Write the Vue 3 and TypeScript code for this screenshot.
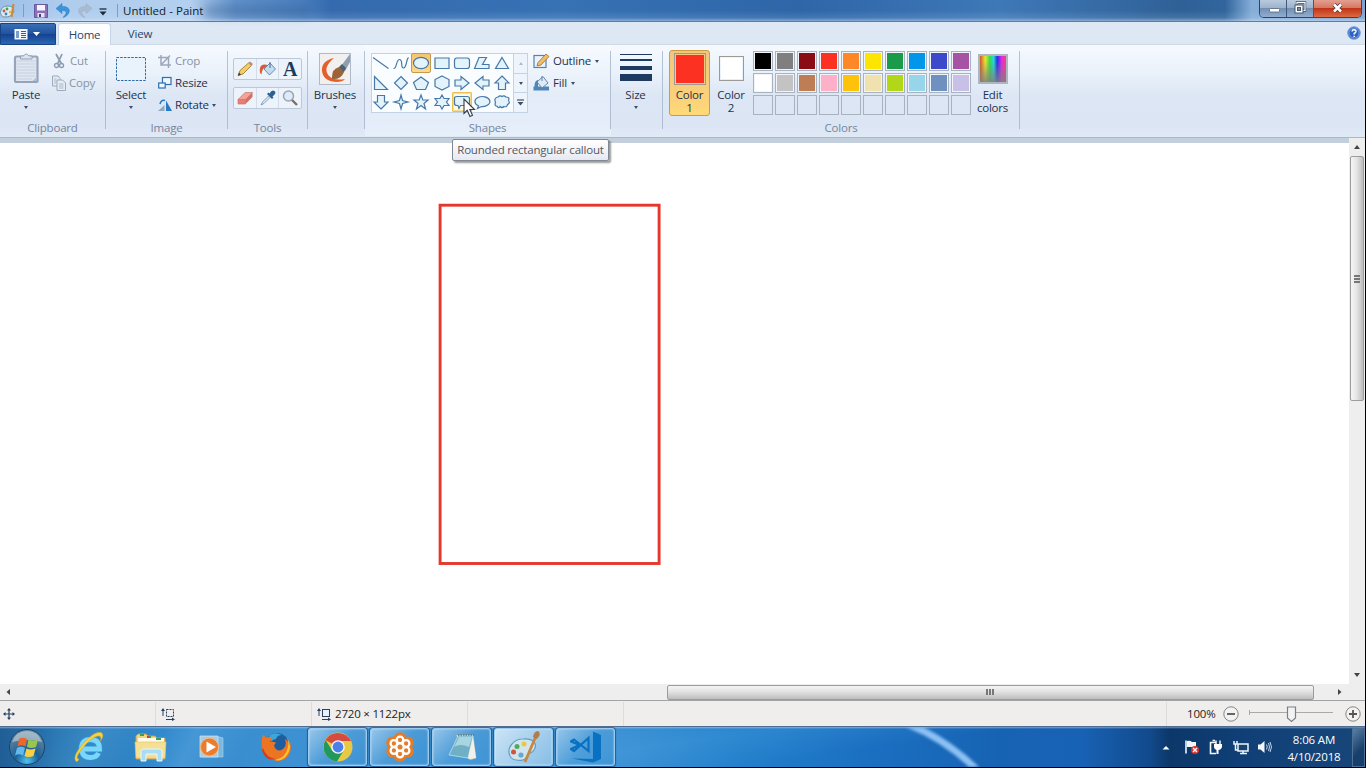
<script setup lang="ts">
interface Shape { d: string; state?: string }

const shapes: Shape[] = [
  { d: 'M2 4.500 L17.500 15.500' },
  { d: 'M2.500 15.500 C6 16 5 6.500 8.500 6.500 C12.500 6.500 9 15 12.500 15 C16 15 15 6 17.500 4.500' },
  { d: 'M2.500 10A7.500 5.700 0 1 0 17.500 10A7.500 5.700 0 1 0 2.500 10Z', state: 'active' },
  { d: 'M3 5H17V15.500H3Z' },
  { d: 'M5 5H15Q17.500 5 17.500 7.500V13Q17.500 15.500 15 15.500H5Q2.500 15.500 2.500 13V7.500Q2.500 5 5 5Z' },
  { d: 'M2.500 15.500L7 4.500H14.500L10.500 11.500H17V15.500Z' },
  { d: 'M10 4.500L16.500 15.500H3.500Z' },
  { d: 'M3.500 3.500V16.500H16.500Z' },
  { d: 'M10 3.500L16.500 10L10 16.500L3.500 10Z' },
  { d: 'M10 4L17.500 9.500L14.500 16.500H5.500L2.500 9.500Z' },
  { d: 'M10 3L17 6.500V13.500L10 17L3 13.500V6.500Z' },
  { d: 'M3 7H9V3.500L17 10L9 16.500V13H3Z' },
  { d: 'M17 7H11V3.500L3 10L11 16.500V13H17Z' },
  { d: 'M10 3L17 10H13.500V16.500H6.500V10H3Z' },
  { d: 'M10 17L17 10H13.500V3.500H6.500V10H3Z' },
  { d: 'M10 3L11.500 8.500L17 10L11.500 11.500L10 17L8.500 11.500L3 10L8.500 8.500Z' },
  { d: 'M10 3L11.800 8H17L13 11.500L14.500 17L10 13.500L5.500 17L7 11.500L3 8H8.200Z' },
  { d: 'M10 3L12 6.500H17L14.500 10L17 13.500H12L10 17L8 13.500H3L5.500 10L3 6.500H8Z' },
  { d: 'M5 4.500H15Q17.500 4.500 17.500 6.500V11.500Q17.500 13.500 15 13.500H8.500L7 16.500L6 13.500H5Q2.500 13.500 2.500 11.500V6.500Q2.500 4.500 5 4.500Z', state: 'hover' },
  { d: 'M5.500 16.500L6.500 13.800A7.500 5 0 1 1 9.500 14.500Z' },
  { d: 'M6 5Q8 3 10 4.500Q12 3 14 5Q18 5 16.500 8.500Q18.500 11 15.500 12.500Q15 15.500 12 14.500Q10 16.500 8 14.500Q6.500 17 5.500 14.500Q2 14 3.500 10.500Q1.500 6 6 5Z' },
]

const palette: string[] = [
  '#000000', '#7f7f7f', '#8a0d15', '#fd3122', '#fe8727', '#fee500', '#199b49', '#0096ea', '#3d49cb', '#a653a4',
  '#ffffff', '#c3c3c3', '#bd7e55', '#ffb0c9', '#ffc20b', '#efe2af', '#b2d618', '#96d5ea', '#6e91bf', '#c9c0e7',
  '', '', '', '', '', '', '', '', '', '',
]

const petals: [number, number][] = [[16, 9], [22.1, 12.5], [22.1, 19.5], [16, 23], [9.900, 19.5], [9.900, 12.5]]
</script>

<template>
  <div class="screen">
    <div class="window">
      <header class="titlebar">
        <svg class="app-ico" width="16" height="17" viewBox="0 0 16 17">
          <path d="M8 4C13 4 15 8 13 11C11 14 9 15 5 15C1 15 0 11 1 8C2 5 5 4 8 4Z" fill="#dcebf0" stroke="#5f98ad" />
          <circle cx="4" cy="9" r="1.400" fill="#d35a3a" /><circle cx="7" cy="7" r="1.400" fill="#4aa04a" /><circle cx="6" cy="12" r="1.400" fill="#3f84c9" /><circle cx="10" cy="10" r="1.200" fill="#e5b73a" />
          <path d="M13.500 2L11.500 15" stroke="#cd8b3e" stroke-width="2.200" />
        </svg>
        <i class="tdiv d1"></i>
        <svg class="qi save" width="14" height="14" viewBox="0 0 14 14">
          <path d="M0.500 0.500H13.500V13.500H0.500Z" fill="#8b70b8" stroke="#6b589c" /><path d="M3 1H11V6.500H3Z" fill="#f4f3fb" /><path d="M3.500 9H10.500V13.500H3.500Z" fill="#e6e0f2" /><path d="M5 10H7V13H5Z" fill="#4b3a78" />
        </svg>
        <svg class="qi undo" width="14" height="15" viewBox="0 0 14 15">
          <path d="M0 5.500L6 0.500V3.500C16 3 15 12 7 14.500C11.500 10 11 7.500 6 7.500V10.500Z" fill="#3a95da" stroke="#2b7dc0" stroke-width=".5" />
        </svg>
        <svg class="qi redo" width="14" height="15" viewBox="0 0 14 15">
          <path d="M14 5.500L8 0.500V3.500C-2 3 -1 12 7 14.500C2.500 10 3 7.500 8 7.500V10.500Z" fill="#a9bbd0" stroke="#9aaec6" stroke-width=".5" />
        </svg>
        <svg class="qi more" width="8" height="8" viewBox="0 0 8 8"><path d="M0.500 1H7.500" stroke="#1c2a3a" stroke-width="1.300" /><path d="M0.500 3.500H7.500L4 7.500Z" fill="#1c2a3a" /></svg>
        <i class="tdiv"></i>
        <span class="title">Untitled - Paint</span>
        <span class="ghost"></span>
        <div class="controls">
          <button class="wb"><svg width="28" height="17"><rect x="9.500" y="8.500" width="10" height="3.500" rx="1" fill="#fff" stroke="#55657a" stroke-width=".8" /></svg></button>
          <button class="wb mid"><svg width="27" height="17"><path d="M10 4.500V2.500H18V10.500H16" fill="none" stroke="#46566b" stroke-width="2.400" /><path d="M10 4V2.500H18V10.500H16" fill="none" stroke="#fff" stroke-width="1.100" /><rect x="8" y="5" width="8" height="8" fill="#fff" stroke="#46566b" /><rect x="10.500" y="7.500" width="3" height="3" fill="#7f92ab" stroke="#46566b" /></svg></button>
          <button class="wb close"><svg width="46" height="17"><path d="M20 4.500L27 11.500M27 4.500L20 11.500" stroke="#5c3b3b" stroke-width="4.200" /><path d="M20 4.500L27 11.500M27 4.500L20 11.500" stroke="#fff" stroke-width="2.500" /></svg></button>
        </div>
      </header>

      <nav class="tabs">
        <button class="file">
          <svg width="28" height="13" viewBox="0 0 28 13"><rect x=".5" y="1" width="13" height="10.500" fill="#f4f9ff" /><path d="M2 3H5V10H2Z" fill="#7c9fc9" /><path d="M7 3.500H12M7 5.500H12M7 7.500H12M7 9.500H12" stroke="#315f9c" /><path d="M19 4H26L22.500 8Z" fill="#fff" /></svg>
        </button>
        <button class="tab on"><span>Home</span></button>
        <button class="tab"><span>View</span></button>
        <svg class="help" width="14" height="14" viewBox="0 0 14 14"><circle cx="7" cy="7" r="6.300" fill="#2c62c4" stroke="#7fa3dd" /><circle cx="7" cy="7" r="5" fill="none" stroke="#8fb4ee" stroke-width=".7" /><path d="M5 5.500Q5.200 3.700 7.200 3.800Q9.300 4 8.900 5.700Q8.500 6.700 7.200 7.400V8.600M7.200 9.700V11" fill="none" stroke="#fff" stroke-width="1.500" /></svg>
      </nav>

      <section class="ribbon">
        <div class="group clipboard">
          <div class="body">
            <div class="big">
              <svg width="28" height="32" viewBox="0 0 28 32"><rect x="3" y="3.500" width="22.500" height="25.500" rx="1.500" fill="#dfe6f1" stroke="#96a4ba" stroke-width="2.200" /><path d="M5 8H23.500M5 11H23.500M5 14H23.500M5 17H23.500M5 20H23.500M5 23H23.500M5 26H20" stroke="#c6d0df" /><path d="M8.500 6V3H11.500Q14.200 -1 17 3H20V6Z" fill="#dce3ee" stroke="#93a1b7" /><path d="M20.500 28L24.500 24V28Z" fill="#b3bfd0" /></svg>
              <span>Paste</span><i class="arrow"></i>
            </div>
            <div class="rows">
              <div class="row off"><svg width="15" height="16" viewBox="0 0 15 16"><path d="M3 1L8.500 11M9 1L4.500 11" stroke="#8e9cb2" stroke-width="1.800" /><circle cx="3.500" cy="12.500" r="2" fill="none" stroke="#8e9cb2" stroke-width="1.400" /><circle cx="8.500" cy="12.500" r="2" fill="none" stroke="#8e9cb2" stroke-width="1.400" /></svg><span>Cut</span></div>
              <div class="row off copy"><svg width="16" height="16" viewBox="0 0 16 16"><path d="M.5 1H6L8 3.500V11H.5Z" fill="#e7edf5" stroke="#9ba8bd" /><path d="M5 5H10.500L13.500 8V15.500H5Z" fill="#e7edf5" stroke="#9ba8bd" /><path d="M2 4H4.500M2 6H4.500M2 8H4.500M7 9H11.500M7 11H11.500M7 13H11.500" stroke="#aab5c7" /></svg><span>Copy</span></div>
            </div>
          </div>
          <footer>Clipboard</footer>
        </div>

        <div class="group image">
          <div class="body">
            <div class="big">
              <svg width="32" height="32" viewBox="0 0 32 32"><rect x="1.500" y="4.500" width="29" height="23" fill="#e9f3fc" stroke="#2c6aa8" stroke-dasharray="2.500 1.200" /></svg>
              <span>Select</span><i class="arrow"></i>
            </div>
            <div class="rows">
              <div class="row off"><svg width="14" height="14" viewBox="0 0 14 14"><path d="M3 1V11H13M0 3.500H10.500V14M3 11L12 1.500" fill="none" stroke="#9ba8bb" stroke-width="1.500" /></svg><span>Crop</span></div>
              <div class="row"><svg width="14" height="14" viewBox="0 0 14 14"><rect x="4.500" y="1.500" width="8.500" height="7" fill="#eef7ff" stroke="#2d6fae" stroke-width="1.200" /><rect x=".7" y="7" width="6.500" height="5" fill="#eef7ff" stroke="#2d6fae" stroke-width="1.200" /></svg><span>Resize</span></div>
              <div class="row"><svg width="14" height="15" viewBox="0 0 14 15"><path d="M8 2.500V13H14Z" fill="#2779c3" /><path d="M6.500 7V13H0Z" fill="#8fa9bb" /><path d="M2 6Q3 1.500 7 2.500" fill="none" stroke="#2779c3" stroke-width="1.500" /></svg><span>Rotate</span><i class="arrow"></i></div>
            </div>
          </div>
          <footer>Image</footer>
        </div>

        <div class="group tools">
          <div class="body">
            <div class="toolbox">
              <b><svg width="18" height="18" viewBox="0 0 18 18"><path d="M2 15.500L4 10.500L12.500 3L15.500 5.500L7 14Z" fill="#f5cd66" stroke="#a37f38" stroke-width=".9" /><path d="M12.500 3L14 1.500L17 4L15.500 5.500Z" fill="#c4877d" /><path d="M2 16L3 12.500L5 14.500Z" fill="#3c342b" /></svg></b>
              <b><svg width="18" height="18" viewBox="0 0 18 18"><path d="M5 9L11 3L16.500 9L10.500 15Z" fill="#c4dcf2" stroke="#5e7fa6" stroke-width=".9" /><path d="M11 2V8" stroke="#5e7fa6" stroke-width="1.200" /><path d="M9 5Q2 3 1 8Q0 13 2.500 14.500Q3 9 5.500 8Z" fill="#d95c35" /></svg></b>
              <b class="glyph">A</b>
            </div>
            <div class="toolbox second">
              <b><svg width="18" height="18" viewBox="0 0 18 18"><path d="M2 10.500L9 3.500H16.500L9.500 10.500Z" fill="#f3a398" stroke="#c97972" stroke-width=".7" /><path d="M2 10.500H9.500V15H2Z" fill="#ea7c72" stroke="#c97972" stroke-width=".7" /><path d="M9.500 10.500L16.500 3.500V8L9.500 15Z" fill="#d17068" /></svg></b>
              <b><svg width="18" height="18" viewBox="0 0 18 18"><path d="M9.500 7L3.500 13L2 16L5 14.500L11 8.500Z" fill="#d5e8f5" stroke="#6f8fac" stroke-width=".8" /><path d="M8 5L13 10L14.500 8.500L13.500 7.500Q18 4 15.500 2Q13 0 10.500 4.500L9.500 3.500Z" fill="#2b6295" /></svg></b>
              <b><svg width="18" height="18" viewBox="0 0 18 18"><circle cx="7.500" cy="7" r="5" fill="#dcebf7" stroke="#9aa5b4" stroke-width="1.500" /><path d="M11 11L16 16" stroke="#7b706b" stroke-width="2.400" /></svg></b>
            </div>
          </div>
          <footer>Tools</footer>
        </div>

        <div class="group brushes">
          <div class="body">
            <div class="big">
              <svg width="32" height="32" viewBox="0 0 32 32"><rect x=".5" y=".5" width="31" height="31" fill="#f2f0ee" stroke="#b0bac8" /><path d="M15 5Q2 8 3 18Q4 28 17 29Q24 29 26 26Q15 28 10 23Q3 15 15 5Z" fill="#e35f2d" /><path d="M22 13L31 1V9L26 18Z" fill="#8da0b0" /><path d="M13 24Q13 16 20 14Q25 14 25 19Q22 27 13 26Z" fill="#9c6339" /><path d="M20 14L23 11L27 15L25 19Z" fill="#4e6072" /></svg>
              <span>Brushes</span><i class="arrow"></i>
            </div>
          </div>
        </div>

        <div class="group shapes">
          <div class="body">
            <div class="gallery">
              <div class="grid">
                <div v-for="(s, i) in shapes" :key="i" class="cell" :class="s.state">
                  <svg width="20" height="20" viewBox="0 0 20 20"><path :d="s.d" :fill="i < 2 ? 'none' : '#e2f3fb'" stroke="#4878a8" stroke-width="1.200" /></svg>
                </div>
              </div>
              <div class="spin"><b class="dim"><i class="arrow up"></i></b><b><i class="arrow"></i></b><b class="last"><svg width="7" height="7" viewBox="0 0 7 7"><path d="M0 1H7" stroke="#3f4e66" stroke-width="1.200" /><path d="M.5 3H6.500L3.500 6.500Z" fill="#3f4e66" /></svg></b></div>
            </div>
            <div class="rows">
              <div class="row"><svg width="17" height="16" viewBox="0 0 17 16"><rect x="1" y="2.500" width="12" height="12" fill="#eaf3fc" stroke="#5681ab" stroke-width="1.200" /><path d="M4 13L5 9.500L13 1L16 3.500L8 12Z" fill="#f1bd68" stroke="#9a6d3a" stroke-width=".8" /></svg><span>Outline</span><i class="arrow"></i></div>
              <div class="row"><svg width="17" height="16" viewBox="0 0 17 16"><path d="M0.500 11.500H16V15.500H0.500Z" fill="#4d86bb" /><path d="M4 7L10 1.500L15 8L9 13Z" fill="#dcebf6" stroke="#6385a8" /><path d="M5 5Q1 6 1.500 12H5Z" fill="#4d86bb" /><path d="M9 1V6" stroke="#6385a8" /></svg><span>Fill</span><i class="arrow"></i></div>
            </div>
          </div>
          <footer>Shapes</footer>
        </div>

        <div class="group size">
          <div class="body">
            <div class="big">
              <svg width="32" height="32" viewBox="0 0 32 32"><path d="M0 1.500H32" stroke="#1e3a60" /><path d="M0 7H32" stroke="#1e3a60" stroke-width="2" /><path d="M0 15H32" stroke="#1e3a60" stroke-width="4" /><path d="M0 24.500H32" stroke="#1e3a60" stroke-width="7" /></svg>
              <span>Size</span><i class="arrow"></i>
            </div>
          </div>
        </div>

        <div class="group colors">
          <div class="body">
            <div class="big color selected"><i class="swatch red"></i><span>Color</span><span>1</span></div>
            <div class="big color"><i class="swatch white"></i><span>Color</span><span>2</span></div>
            <div class="palette"><i v-for="(c, i) in palette" :key="i" :class="{ filled: c }" :style="c ? { backgroundColor: c } : {}"></i></div>
            <div class="big edit"><i class="spectrum"></i><span>Edit</span><span>colors</span></div>
          </div>
          <footer>Colors</footer>
        </div>
      </section>

      <main class="work">
        <div class="canvas">
          <svg width="700" height="500" viewBox="0 0 700 500"><rect x="440.100" y="62.200" width="219" height="358.300" fill="none" stroke="#e4382e" stroke-width="2.900" /></svg>
        </div>
        <div class="vscroll"><b><i class="arrow up dark"></i></b><div class="thumb"><i></i><i></i><i></i></div><b class="end"><i class="arrow dark"></i></b></div>
      </main>
      <div class="hscroll"><svg width="6" height="8" viewBox="0 0 6 8"><path d="M5 1V7L1.500 4Z" fill="#444" /></svg><div class="thumb"><i></i><i></i><i></i></div><svg class="right" width="6" height="8" viewBox="0 0 6 8"><path d="M1 1V7L4.500 4Z" fill="#444" /></svg></div>

      <footer class="status">
        <div class="s1"><svg width="12" height="12" viewBox="0 0 12 12"><path d="M6 1V11M1 6H11" stroke="#29405f" stroke-width="1.200" /><path d="M6 0L8 2.500H4ZM6 12L8 9.500H4ZM0 6L2.500 4V8ZM12 6L9.500 4V8Z" fill="#29405f" /></svg></div>
        <div class="s2"><svg width="14" height="13" viewBox="0 0 14 13"><path d="M2 2V8M5 11.500H12" stroke="#29405f" /><path d="M2 0L4 3H0ZM14 11.500L11 9.500V13Z" fill="#29405f" /><rect x="5.500" y="1.500" width="7" height="7" fill="none" stroke="#29405f" stroke-dasharray="2 1" /></svg></div>
        <div class="s3"><svg width="14" height="13" viewBox="0 0 14 13"><path d="M2 2V8M5 11.500H12" stroke="#29405f" /><path d="M2 0L4 3H0ZM14 11.500L11 9.500V13Z" fill="#29405f" /><rect x="5.500" y="1.500" width="7" height="7" fill="#e5f2fc" stroke="#29405f" /></svg><span>2720 × 1122px</span></div>
        <div class="s4"></div>
        <div class="s5"></div>
        <div class="zoom">
          <span>100%</span>
          <svg width="16" height="16" viewBox="0 0 16 16"><circle cx="8" cy="8" r="7.200" fill="#f2f2f2" stroke="#858585" /><path d="M4 8H12" stroke="#555" stroke-width="1.800" /></svg>
          <svg class="slider" width="84" height="18" viewBox="0 0 84 18"><path d="M0.500 5V10M0 7.500H84" stroke="#a9a9a9" /><path d="M38.500 2H46.500V13L42.500 16.500L38.500 13Z" fill="#f2f2f2" stroke="#7c8085" stroke-width="1.200" /></svg>
          <svg width="16" height="16" viewBox="0 0 16 16"><circle cx="8" cy="8" r="7.200" fill="#f2f2f2" stroke="#858585" /><path d="M4 8H12M8 4V12" stroke="#555" stroke-width="1.800" /></svg>
        </div>
      </footer>

      <footer class="taskbar">
        <svg class="swoosh" width="160" height="40" viewBox="0 0 160 40"><path d="M24 -8Q74 8 112 48" fill="none" stroke="#8dc1f4" stroke-width="7" /></svg>
        <div class="tile orb">
          <svg width="38" height="38" viewBox="0 0 38 38">
            <defs>
              <radialGradient id="orb" cx=".5" cy=".9" r=".85"><stop offset="0" stop-color="#4fc3ee" /><stop offset=".4" stop-color="#1b6096" /><stop offset="1" stop-color="#6f8c9f" /></radialGradient>
            </defs>
            <circle cx="19" cy="19" r="17.500" fill="url(#orb)" stroke="#16446f" />
            <path d="M4 14Q8 3 19 3Q30 3 34 14Q19 10 4 14Z" fill="#dbe8ee" opacity=".5" />
            <path d="M11 11Q14 8.500 19 11L17.500 18.500Q13 16 9.500 18.500Z" fill="#ee662a" />
            <path d="M20.500 11.500Q25 13.500 30 11.500L28 19Q23 21 19 19Z" fill="#99c64d" />
            <path d="M9 20Q13 17.500 17 20L15 27.500Q11 25 7 27.500Z" fill="#61b9ee" />
            <path d="M18.500 20.500Q22.500 22.500 27.500 20.500L25.500 28Q20.500 30 16.500 28Z" fill="#fccf43" />
          </svg>
        </div>
        <div class="tile ie">
          <svg width="32" height="32" viewBox="0 0 32 32"><path d="M9 18H26.500Q26.500 8.500 17.500 8.500Q8.500 8.500 8.500 17.500Q8.500 26.500 17.500 26.500Q23.500 26.500 25.500 22" fill="none" stroke="#2b95d8" stroke-width="6.400" /><path d="M9 18H26.500Q26.500 8.500 17.500 8.500Q8.500 8.500 8.500 17.500Q8.500 26.500 17.500 26.500Q23.500 26.500 25.500 22" fill="none" stroke="#7ad6fa" stroke-width="4.800" /><path d="M3 30.500Q-1 26 9 14Q21 0 28 1.500Q32 3.500 27.500 10Q29 4.500 25 5Q18 6 8 19Q1.500 28 6 28Q5 31 3 30.500Z" fill="#f9d33b" stroke="#d2a622" stroke-width=".5" /></svg>
        </div>
        <div class="tile folder">
          <svg width="34" height="32" viewBox="0 0 34 32"><path d="M2 5L4 3H12L14 5H21L23 7H31V28H2Z" fill="#eed584" stroke="#c99e4b" /><path d="M4 7H30V12H4Z" fill="#fffbe5" /><path d="M6 4H10M13 6H17M22 8H27" stroke="#3b9b5e" stroke-width="2" /><path d="M13 6H15" stroke="#c54635" stroke-width="2" /><path d="M1 11H32L31 27H2Z" fill="#f4df94" stroke="#e1c26a" stroke-width=".6" /><path d="M7 30V20Q7 18 10 18H25Q28 18 28 20V30H23V23H12V30Z" fill="#a9dcf5" stroke="#e6f8ff" /></svg>
        </div>
        <div class="tile media">
          <svg width="28" height="28" viewBox="0 0 28 28"><path d="M5 4H23L26 5V24H5Z" fill="#79b8e4" stroke="#a9d7f3" stroke-width=".6" /><path d="M3 3H21V24H3Z" fill="#a6cbe7" stroke="#cee7f7" stroke-width=".7" /><circle cx="12.500" cy="14" r="9" fill="#ea7c2c" stroke="#f8b978" /><path d="M9.500 8.500L19 14L9.500 19.500Z" fill="#fff" /></svg>
        </div>
        <div class="tile fox">
          <svg width="32" height="32" viewBox="0 0 32 32"><circle cx="17" cy="13.500" r="11.500" fill="#205d9e" /><path d="M9 5Q14 0 22 4Q17 4 16 8Q13 8 11 11Z" fill="#3da8d6" /><path d="M3 4Q5 5 6 7Q9 5 12 7L10 11Q14 10 16 12Q13 14 15 17Q19 22 24 17Q27 14 25 8Q29 10 29 16Q31 10 28 7Q34 17 28 25Q22 32 13 29Q2 26 2 15Q1 9 3 4Z" fill="#ed7521" /><path d="M27 7Q33 16 27 24Q22 31 15 29Q26 27 28 16Q29 11 27 7Z" fill="#ffc32b" /><path d="M3 17Q6 27 16 28Q5 31 2 19Z" fill="#cf3e24" /></svg>
        </div>
        <div class="app"><svg width="32" height="32" viewBox="0 0 32 32"><circle cx="16" cy="16" r="14.500" fill="#e9c942" /><path d="M16 16L3.500 9A14.500 14.500 0 0 1 29 10H16Z" fill="#d74b3e" /><path d="M3.500 9A14.500 14.500 0 0 0 15 30.500L22 19L16 22L10 19Z" fill="#22995c" /><circle cx="16" cy="16" r="6.800" fill="#f4f7fb" /><circle cx="16" cy="16" r="5.400" fill="#4b80e8" /></svg></div>
        <div class="app"><svg width="32" height="32" viewBox="0 0 32 32"><g fill="#e57c27"><circle v-for="(p, i) in petals" :key="'b' + i" :cx="p[0] + (p[0] - 16) * .2" :cy="p[1] + (p[1] - 16) * .2" r="6.400" /></g><g fill="none" stroke="#fff" stroke-width="2.300"><circle v-for="(p, i) in petals" :key="'f' + i" :cx="p[0]" :cy="p[1]" r="3.300" /></g><circle cx="16" cy="16" r="4.600" fill="#fff" /><circle cx="16" cy="16" r="2.500" fill="#e57c27" /></svg></div>
        <div class="app"><svg width="32" height="32" viewBox="0 0 32 32"><path d="M10 4H27L30 27L24 29Z" fill="#e7e8df" stroke="#a4a99d" stroke-width=".7" /><path d="M12 5H27L22 27L3 24Z" fill="#6fb0c4" stroke="#b9e4ed" stroke-width=".8" /><path d="M13 6H26L23 16Q14 12 8 16Z" fill="#b7dfe6" opacity=".8" /><path d="M12 4H28" stroke="#5c777f" stroke-width="1.500" stroke-dasharray="1.500 1" /><path d="M22 28L27 6L30 27Z" fill="#f2f1e9" /></svg></div>
        <div class="app current"><svg width="34" height="34" viewBox="0 0 34 34"><path d="M16 9C26 8 31 14 27 20C25 24 21 22 20 26C19 30 14 31 9 30C1 29 0 19 5 14C8 10 11 9 16 9Z" fill="#d0e5ed" stroke="#5fa0c0" stroke-width="1.200" /><circle cx="6.500" cy="22" r="2.500" fill="#d3533b" /><circle cx="10" cy="16.500" r="2.500" fill="#4cad62" /><circle cx="17" cy="14" r="2.500" fill="#edc645" /><circle cx="14" cy="25" r="2.600" fill="#6ba5d0" /><path d="M29 6L18 32" stroke="#c9873f" stroke-width="2.800" /><path d="M26 7Q27 1 31 1Q35 4 30 9Z" fill="#b07d4b" /></svg></div>
        <div class="app"><svg width="32" height="32" viewBox="0 0 32 32"><path d="M23 .5L31 4V28L23 31.500L2 27.500L23 28Z" fill="#0871c2" /><path d="M1 10.500L4 8.500L18.500 20V7L4 20L1 18L9.500 14Z" fill="none" stroke="#0871c2" stroke-width="2.200" /></svg></div>
        <div class="tray">
          <svg width="8" height="5" viewBox="0 0 8 5"><path d="M0.500 4.500L4 1L7.500 4.500Z" fill="#fff" /></svg>
          <svg class="flag" width="16" height="16" viewBox="0 0 16 16"><path d="M2 1.500V14.500" stroke="#fff" stroke-width="1.500" /><path d="M3 2Q6 1 8 3H12V9Q9 8 7 8H3Z" fill="#f2f6fb" /><circle cx="11" cy="11" r="4" fill="#d9352e" /><path d="M9 9L13 13M13 9L9 13" stroke="#fff" stroke-width="1.300" /></svg>
          <svg class="plug" width="16" height="16" viewBox="0 0 16 16"><path d="M8 3.500H2.500V14.500H8M4.500 1.500H7" fill="none" stroke="#f2f6fb" stroke-width="1.600" /><path d="M8 1.500V5M12 1.500V5" stroke="#fff" stroke-width="1.400" /><path d="M6 5H14V8Q13 11 10.500 11V15H8.500V11Q6 10 6 8Z" fill="#fff" /></svg>
          <svg class="net" width="16" height="16" viewBox="0 0 16 16"><path d="M5 5H15V12H5Z" fill="#17416f" stroke="#eff5fc" stroke-width="1.500" /><path d="M7 14.500H14M10 12V14" stroke="#eff5fc" stroke-width="1.500" /><path d="M1 2V5H4V2M2.500 5V11H5" fill="none" stroke="#eff5fc" stroke-width="1.500" /></svg>
          <svg class="vol" width="16" height="16" viewBox="0 0 16 16"><path d="M1 5.500H3.500L7.500 2V14L3.500 10.500H1Z" fill="#f2f6fb" /><path d="M9.500 5.500Q11 8 9.500 10.500M11.500 4Q13.500 8 11.500 12M13 3Q16 8 13 13" fill="none" stroke="#d8e5f2" stroke-width=".9" /></svg>
        </div>
        <div class="clock"><span>8:06 AM</span><span>4/10/2018</span></div>
        <div class="desk"></div>
      </footer>
    </div>
    <div class="tip">Rounded rectangular callout</div>
    <svg class="cursor" width="14" height="20" viewBox="0 0 14 20"><path d="M1 1V15.500L4.200 12.300L7 18.500L9.500 17.300L6.800 11.500H11.500Z" fill="#fff" stroke="#333b45" stroke-width="1.100" /></svg>
  </div>
</template>

<style>
html, body { margin: 0; overflow: hidden; background: #000; }
</style>

<style scoped>
.screen { position: relative; width: 1366px; height: 768px; background: #000; overflow: hidden; font: 11.500px/14px "Open Sans", "Noto Sans", sans-serif; letter-spacing: -.2px; color: #24324b; }
.window { width: 1365px; height: 767px; display: flex; flex-direction: column; background: #fff; }
svg, i { display: block; flex: none; }
button { border: 0; padding: 0; margin: 0; font: inherit; letter-spacing: inherit; color: inherit; background: none; }
span { white-space: nowrap; }

.titlebar { height: 21px; display: flex; align-items: center; border-bottom: 1px solid #5b7da9; box-sizing: content-box; background: linear-gradient(rgba(255,255,255,0) 50%, rgba(220,235,255,.12) 85%, rgba(220,235,255,.5)), linear-gradient(90deg, #9dbfe7 0, #b1cdee 70px, #b4d0ef 190px, #6292cb 235px, #4a7fbf 300px, #356aae 330px, #3772b5 560px, #2e66a8 800px, #3f78b7 1000px, #2f6197 1180px, #31659c 1225px, #86aed9 1252px, #7ba5d0 1365px); }
.tdiv { width: 1px; height: 13px; background: #7d9cc3; }
.d1 { margin-left: 7px; }
.save { margin-left: 10px; }
.undo { margin-left: 8px; }
.redo { margin-left: 8px; }
.more { margin: 2px 10px 0 7px; }
.title { margin-left: 5px; width: 82px; color: #111c2a; letter-spacing: .03px; }
.ghost { width: 104px; height: 12px; background: #345d90; opacity: .35; filter: blur(4px); }
.controls { margin: 0 3px 0 auto; align-self: flex-start; display: flex; border: 1px solid #2e4666; border-top: 0; border-radius: 0 0 5px 5px; overflow: hidden; }
.wb { width: 27px; height: 17px; background: linear-gradient(#b9cade, #9bb2cc 48%, #7390b1 50%, #91add0); border-right: 1px solid #415a7b; }
.wb.close { width: 47px; border-right: 0; background: linear-gradient(#e3a091, #d6755f 48%, #bf3517 50%, #de6a42); }

.tabs { height: 23px; display: flex; align-items: flex-end; background: #dee8f5; box-shadow: inset 0 -1px #cbd9ea; }
.file { width: 56px; height: 22px; display: flex; align-items: center; justify-content: center; background: linear-gradient(#3a6fb5, #1f53a0 50%, #15438f 52%, #2a66b4); border: 1px solid #184484; box-sizing: border-box; border-radius: 0 2px 0 0; }
.tab { height: 22px; width: 58px; text-align: center; color: #2d4568; }
.tab.on { width: 53px; margin-left: 2px; background: #fbfdff; border: 1px solid #c5d5e9; border-bottom: 0; box-sizing: border-box; border-radius: 3px 3px 0 0; }
.help { margin: 0 4px 5px auto; }

.ribbon { height: 93px; box-sizing: border-box; display: flex; background: linear-gradient(#f6faff 0, #e9f1fa 28px, #dce6f4 52px, #dbe5f4 80px, #e0eaf6 100%); border-bottom: 1px solid #a9b8cc; }
.group { position: relative; box-sizing: border-box; display: flex; flex-direction: column; height: 91px; border-right: 1px solid transparent; border-image: linear-gradient(transparent 7px, #b4c2d5 7px, #aebdd1 83px, transparent 83px) 1; }
.body { height: 76px; padding-top: 5px; box-sizing: border-box; display: flex; }
.group > footer { text-align: center; color: #76859c; line-height: 16px; }
.big { display: flex; flex-direction: column; align-items: center; padding-top: 3px; box-sizing: border-box; }
.big span { margin-top: 3px; line-height: 14px; }
.big span + span { margin-top: -1px; }
.big .arrow { margin-top: 4px; }
.arrow { width: 0; height: 0; border: 2.500px solid transparent; border-top: 3px solid #3f4e66; border-bottom: 0; }
.arrow.up { border-bottom: 3px solid #3f4e66; border-top: 0; }
.arrow.dark { border: 3.500px solid transparent; border-top: 4px solid #444; border-bottom: 0; }
.arrow.up.dark { border-bottom: 4px solid #444; border-top: 0; }
.row { height: 22px; display: flex; align-items: center; gap: 3px; }
.off { color: #8793a6; }

.clipboard { width: 106px; }
.clipboard .big { width: 52px; }
.clipboard .rows { margin-left: 1px; }
.clipboard .row { gap: 2px; }
.clipboard .copy { gap: 1px; margin-left: -1px; }
.image { width: 122px; }
.image .big { width: 50px; }
.image .rows { margin-left: 2px; }
.tools { width: 80px; }
.tools .body { flex-direction: column; padding: 13px 0 0 5px; }
.toolbox { width: 69px; height: 22px; box-sizing: border-box; display: flex; border: 1px solid #bcc8d8; border-radius: 2px; background: #edf3fa; }
.toolbox b { flex: 1; display: flex; align-items: center; justify-content: center; }
.toolbox b + b { border-left: 1px solid #d3dce9; }
.second { margin-top: 7px; }
.toolbox .glyph { font: bold 20px/18px "Liberation Serif", serif; color: #1b3a5e; }
.brushes { width: 57px; }
.brushes .body, .size .body { justify-content: center; padding-right: 2px; }
.shapes { width: 246px; background: linear-gradient(rgba(255,255,255,.15), rgba(240,248,255,.45)); }
.shapes .body { padding-left: 6px; }
.gallery { margin-top: 3px; width: 157px; height: 60px; box-sizing: border-box; display: flex; border: 1px solid #c5d2e4; background: #fafdff; }
.grid { margin: -1px 0 0 -1px; display: grid; grid-template-columns: repeat(7, 20.200px); grid-template-rows: repeat(3, 19.700px); width: 142px; }
.cell { display: flex; align-items: center; justify-content: center; box-sizing: border-box; width: 20px; height: 20px; }
.cell svg { margin: -1px; }
.cell.active { background: linear-gradient(#f5c470, #fcd98b); border: 1px solid #c79a4a; border-radius: 2px; }
.cell.hover { background: #fdf9e8; border: 1px solid #ebc04f; box-shadow: inset 0 0 0 1px #f9e08e; border-radius: 1px; }
.spin { flex: 1; display: flex; flex-direction: column; border-left: 1px solid #c5d2e4; background: #eef4fb; }
.spin b { flex: 1; display: flex; align-items: center; justify-content: center; }
.spin b + b { border-top: 1px solid #c5d2e4; }
.dim .arrow { opacity: .35; }
.shapes .rows { margin-left: 5px; }
.shapes .row { gap: 3px; }
.shapes .row .arrow { margin-left: 1px; }
.size { width: 52px; }
.colors { width: 357px; }
.colors .body { padding-left: 6px; }
.color { width: 42px; height: 66px; }
.color.selected { width: 41px; padding-top: 2px; border: 1px solid #cd9c42; border-radius: 3px; background: linear-gradient(#f0c77f, #f8cd7c 55%, #ffd977); }
.swatch { border: 1px solid #9b9a94; box-sizing: border-box; background-clip: content-box; padding: 1px; }
.red { background-color: #fd3122; width: 32px; height: 32px; margin-bottom: 1px; }
.red + span { margin-top: 2px; }
.white { background-color: #fff; width: 25px; height: 25px; margin: 3px 0 4px; }
.palette { display: grid; grid-template-columns: repeat(10, 20px); grid-auto-rows: 20px; gap: 2px; margin: 1px 0 0 1px; }
.palette i { box-sizing: border-box; border: 1px solid #a9b2bf; background-clip: content-box; padding: 1px; }
.palette i.filled { box-shadow: inset 0 0 0 1px #f1f5fa; }
.edit { width: 43px; }
.spectrum { width: 30px; height: 30px; margin: 1px 0; box-sizing: border-box; border: 2px solid #aeb5bf; background: linear-gradient(rgba(128,128,128,0) 20%, rgba(128,128,128,.85)), linear-gradient(90deg, #c9582f, #ece22f 20%, #31db49 38%, #24d8de 53%, #272ee8 66%, #e62be6 84%, #ff3b74); }

.work { flex: 1; display: flex; min-height: 0; background: #fff; }
.canvas { flex: 1; border-top: 5px solid #c4cfde; overflow: hidden; }
.vscroll { width: 16px; background: #eee; display: flex; flex-direction: column; align-items: center; }
.vscroll b { height: 18px; display: flex; align-items: center; }
.vscroll .end { margin-top: auto; }
.vscroll .thumb { width: 14px; height: 245px; margin-left: -1px; box-sizing: border-box; border: 1px solid #9c9c9c; border-radius: 2px; background: linear-gradient(90deg, #f5f5f5, #e5e5e5 45%, #bdbdbd); display: flex; flex-direction: column; align-items: center; justify-content: center; gap: 1px; }
.vscroll .thumb i { width: 6px; height: 2px; background: #767676; }
.hscroll { height: 17px; border-bottom: 1px solid #a3a3a3; background: #eee; display: flex; align-items: center; padding-left: 5px; box-sizing: border-box; }
.hscroll .thumb { margin-left: 656px; width: 647px; height: 15px; box-sizing: border-box; border: 1px solid #9c9c9c; border-radius: 2px; background: linear-gradient(#f4f4f4, #e2e2e2 45%, #bdbdbd); display: flex; align-items: center; justify-content: center; gap: 1px; padding-right: 2px; }
.hscroll .thumb i { width: 2px; height: 6px; background: #777; }
.right { margin-left: 23px; }

.status { height: 26px; box-sizing: border-box; display: flex; background: #f0eeec; border-bottom: 1px solid #506c91; color: #1d1d1d; padding-top: 1px; }
.status > div { box-sizing: border-box; display: flex; align-items: center; border-right: 1px solid #dcdcdc; }
.s1 { width: 156px; padding-left: 3px; }
.s2 { width: 156px; padding-left: 5px; }
.s3 { width: 156px; padding-left: 5px; gap: 4px; }
.s4 { width: 156px; }
.s5 { width: 543px; }
.status > .zoom { flex: 1; border: 0; padding-left: 20px; }
.zoom span { width: 36px; }
.slider { margin: 0 12px 0 10px; }

.taskbar { height: 40px; display: flex; align-items: center; background: linear-gradient(rgba(190,220,250,.55), transparent 2px), linear-gradient(115deg, transparent 40px, rgba(120,190,235,.2) 90px, transparent 130px, transparent 150px, rgba(120,190,235,.25) 180px, transparent 230px), linear-gradient(172deg, transparent 35%, rgba(80,165,225,.25) 48%, transparent 62%), linear-gradient(90deg, #205e95 0, #2877b3 60px, #3289cc 160px, #3d91d2 290px, #3a90d3 620px, #237fcb 740px, #1b70c2 860px, #1763b3 1000px, #1862b5 1080px, #124a8c 1150px, #0c3769 1170px, #0f3f76 1240px, #174779 1365px); position: relative; overflow: hidden; }
.swoosh { position: absolute; left: 870px; top: 0; filter: blur(1.500px); }
.tile { display: flex; align-items: center; justify-content: center; height: 40px; }
.orb { width: 54px; }
.ie { width: 70px; }
.folder { width: 54px; }
.media { width: 66px; }
.fox { width: 63px; }
.app { width: 59px; height: 38px; margin-left: 3px; box-sizing: border-box; border: 1px solid #9ccbee; border-radius: 3px; box-shadow: inset 0 0 2px rgba(255,255,255,.7), 0 0 1px 1px rgba(22,65,107,.65); display: flex; align-items: center; justify-content: center; background: linear-gradient(135deg, rgba(210,233,250,.6), rgba(120,185,228,.25) 50%, rgba(60,150,215,.2)); }
.fox + .app { margin-left: 1px; }
.app.current { background: linear-gradient(135deg, rgba(240,249,255,.8), rgba(180,217,241,.6)); }
.tray { display: flex; align-items: center; margin-left: auto; }
.flag { margin-left: 14px; }
.plug { margin-left: 8px; }
.net { margin-left: 9px; }
.vol { margin-left: 8px; }
.clock { width: 76px; margin-left: 3px; display: flex; flex-direction: column; align-items: center; gap: 2px; color: #fff; line-height: 15px; letter-spacing: -.15px; padding-top: 1px; }
.desk { width: 13px; height: 39px; box-sizing: border-box; border: 1px solid #4d7196; background: linear-gradient(135deg, #5b80a5, #173f6b 60%); }

.tip { position: absolute; left: 452px; top: 139px; width: 157px; height: 22px; box-sizing: border-box; border: 1px solid #818891; border-radius: 2px; background: linear-gradient(#fff, #e7e9f2); box-shadow: 2px 2px 2px rgba(0,0,0,.4); color: #545860; text-align: center; line-height: 20px; white-space: nowrap; }
.cursor { position: absolute; left: 463px; top: 98px; }
</style>
